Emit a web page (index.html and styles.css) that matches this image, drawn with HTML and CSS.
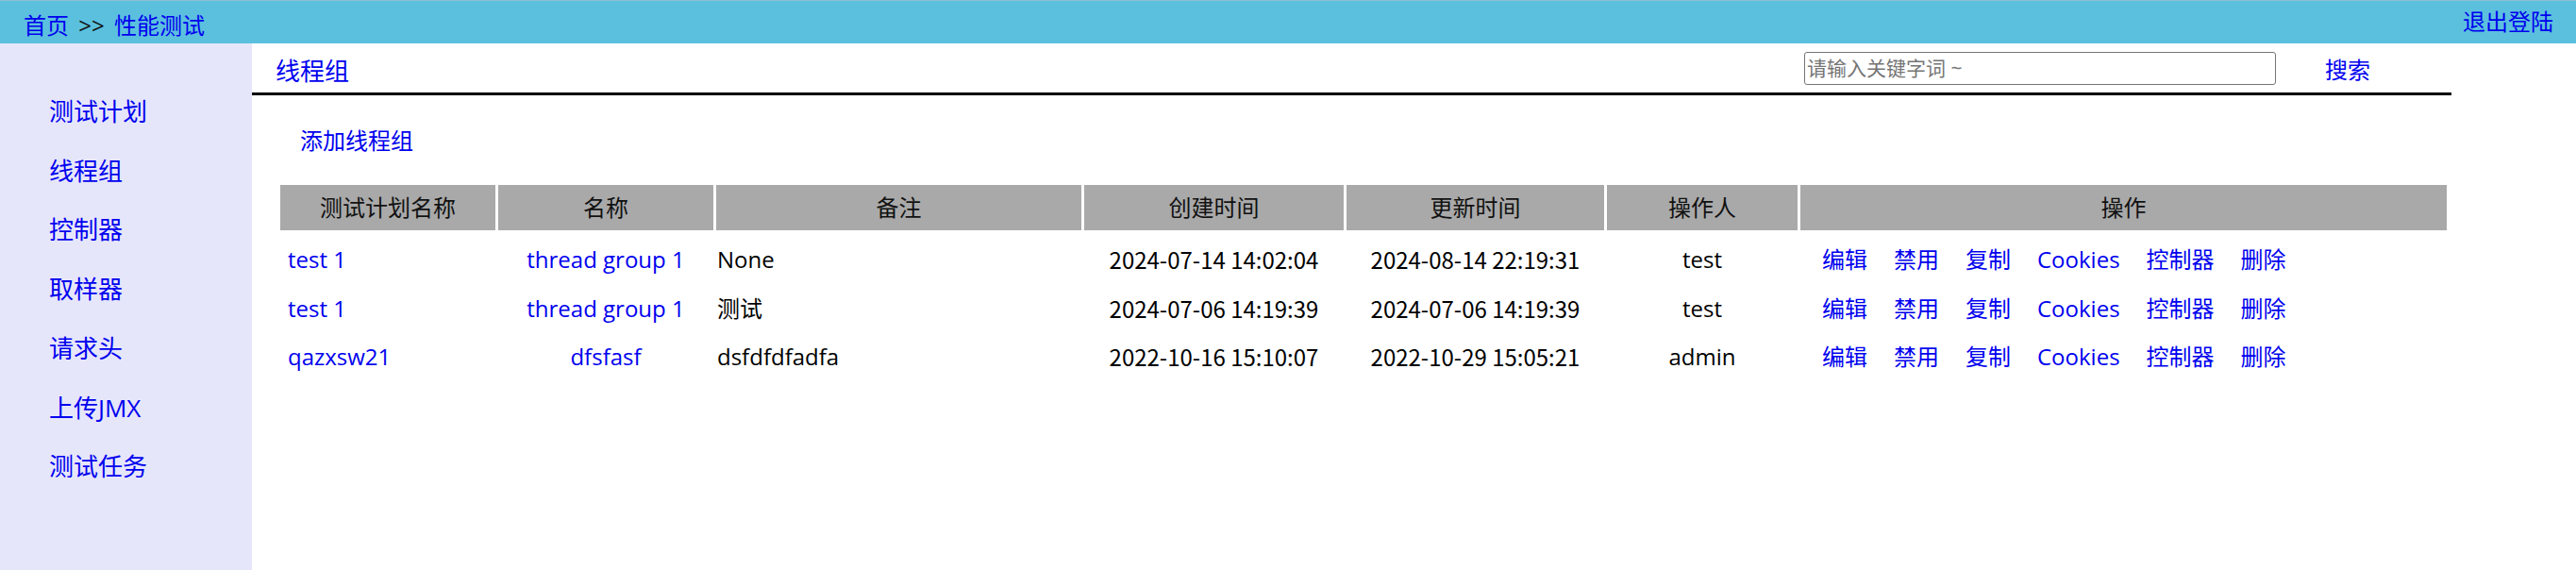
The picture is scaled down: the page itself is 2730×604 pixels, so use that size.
FILE: index.html
```html
<!DOCTYPE html>
<html lang="zh-CN">
<head>
<meta charset="utf-8">
<title>线程组</title>
<link rel="stylesheet" href="styles.css">
</head>
<body>
<header class="topbar">
  <div class="crumb"><a href="#">首页</a> &gt;&gt; <a href="#">性能测试</a></div>
  <a class="logout" href="#">退出登陆</a>
</header>
<div class="layout">
  <nav class="sidebar">
    <a href="#">测试计划</a>
    <a href="#">线程组</a>
    <a href="#">控制器</a>
    <a href="#">取样器</a>
    <a href="#">请求头</a>
    <a href="#">上传JMX</a>
    <a href="#">测试任务</a>
  </nav>
  <main class="main">
    <div class="titlebar">
      <a class="title" href="#">线程组</a>
      <input class="search-input" type="text" placeholder="请输入关键字词 ~">
      <a class="search" href="#">搜索</a>
    </div>
    <div class="actions"><a href="#">添加线程组</a></div>
    <table class="grid">
      <thead>
        <tr>
          <th class="c1">测试计划名称</th>
          <th class="c2">名称</th>
          <th class="c3">备注</th>
          <th class="c4">创建时间</th>
          <th class="c5">更新时间</th>
          <th class="c6">操作人</th>
          <th class="c7">操作</th>
        </tr>
      </thead>
      <tbody>
        <tr>
          <td class="plan"><a href="#">test 1</a></td>
          <td class="center"><a href="#">thread group 1</a></td>
          <td class="note">None</td>
          <td class="center time">2024-07-14 14:02:04</td>
          <td class="center time">2024-08-14 22:19:31</td>
          <td class="center">test</td>
          <td class="ops"><a href="#">编辑</a><a href="#">禁用</a><a href="#">复制</a><a href="#">Cookies</a><a href="#">控制器</a><a href="#">删除</a></td>
        </tr>
        <tr>
          <td class="plan"><a href="#">test 1</a></td>
          <td class="center"><a href="#">thread group 1</a></td>
          <td class="note">测试</td>
          <td class="center time">2024-07-06 14:19:39</td>
          <td class="center time">2024-07-06 14:19:39</td>
          <td class="center">test</td>
          <td class="ops"><a href="#">编辑</a><a href="#">禁用</a><a href="#">复制</a><a href="#">Cookies</a><a href="#">控制器</a><a href="#">删除</a></td>
        </tr>
        <tr>
          <td class="plan"><a href="#">qazxsw21</a></td>
          <td class="center"><a href="#">dfsfasf</a></td>
          <td class="note">dsfdfdfadfa</td>
          <td class="center time">2022-10-16 15:10:07</td>
          <td class="center time">2022-10-29 15:05:21</td>
          <td class="center">admin</td>
          <td class="ops"><a href="#">编辑</a><a href="#">禁用</a><a href="#">复制</a><a href="#">Cookies</a><a href="#">控制器</a><a href="#">删除</a></td>
        </tr>
      </tbody>
    </table>
  </main>
</div>
</body>
</html>
```
FILE: styles.css
```css
* { box-sizing: border-box; }

html, body {
  margin: 0;
  padding: 0;
  background: #ffffff;
}

body {
  font-family: "Open Sans", "Noto Sans CJK SC", sans-serif;
  font-size: 24px;
  color: #000000;
}

a {
  color: #0000ee;
  text-decoration: none;
}

.topbar {
  height: 46px;
  background: #5bc0de;
  border-top: 1px solid #8fbfd0;
  display: flex;
  align-items: center;
  justify-content: space-between;
  padding: 0 24px 0 25px;
  font-size: 24px;
  line-height: 30px;
}

.crumb {
  color: #111111;
  margin-top: 6px;
  word-spacing: 4px;
  letter-spacing: 0;
}

.logout {
  margin-top: -2px;
}

.layout {
  display: flex;
  min-height: calc(100vh - 46px);
}

.sidebar {
  width: 267px;
  flex: none;
  background: #e6e6fa;
  padding: 41px 0 0 52px;
  font-size: 26px;
}

.sidebar a {
  display: block;
  line-height: 62.7px;
}

.main {
  flex: 1;
}

.titlebar {
  width: 2331px;
  height: 55px;
  border-bottom: 3px solid #000000;
  display: flex;
  align-items: center;
  padding: 0 86px 0 25px;
}

.title {
  font-size: 26px;
  margin-top: 4px;
}

.search-input {
  margin-left: auto;
  width: 500px;
  height: 35px;
  border: 1px solid #767676;
  border-radius: 3px;
  padding: 0 2px;
  font-family: "Open Sans", "Noto Sans CJK SC", sans-serif;
  font-size: 21px;
  color: #000000;
  background: #ffffff;
}

.search-input::placeholder {
  color: #757575;
}

.search {
  margin-left: 52px;
  font-size: 24px;
}

.actions {
  padding: 31px 0 0 51px;
  line-height: 34px;
}

.grid {
  margin: 27px 0 0 27px;
  width: 2302px;
  table-layout: fixed;
  border-collapse: separate;
  border-spacing: 3px;
}

.grid th {
  height: 48px;
  padding: 0;
  background: #a9a9a9;
  font-weight: normal;
  color: #111111;
  text-align: center;
  line-height: 48px;
}

.c1 { width: 228px; }
.c2 { width: 228px; }
.c3 { width: 387px; }
.c4 { width: 275px; }
.c5 { width: 273px; }
.c6 { width: 202px; }
.c7 { width: 685px; }

.grid td {
  padding: 8px 0 0;
  line-height: 40.5px;
  white-space: nowrap;
  vertical-align: top;
}

.grid td.plan { padding-left: 8px; }
.grid td.note { padding-left: 1px; }
.grid td.center { text-align: center; }
.grid td.time { font-family: "Noto Sans CJK SC", sans-serif; }

.grid td.ops { padding-left: 23px; }
.ops a { margin-right: 28px; }
```
